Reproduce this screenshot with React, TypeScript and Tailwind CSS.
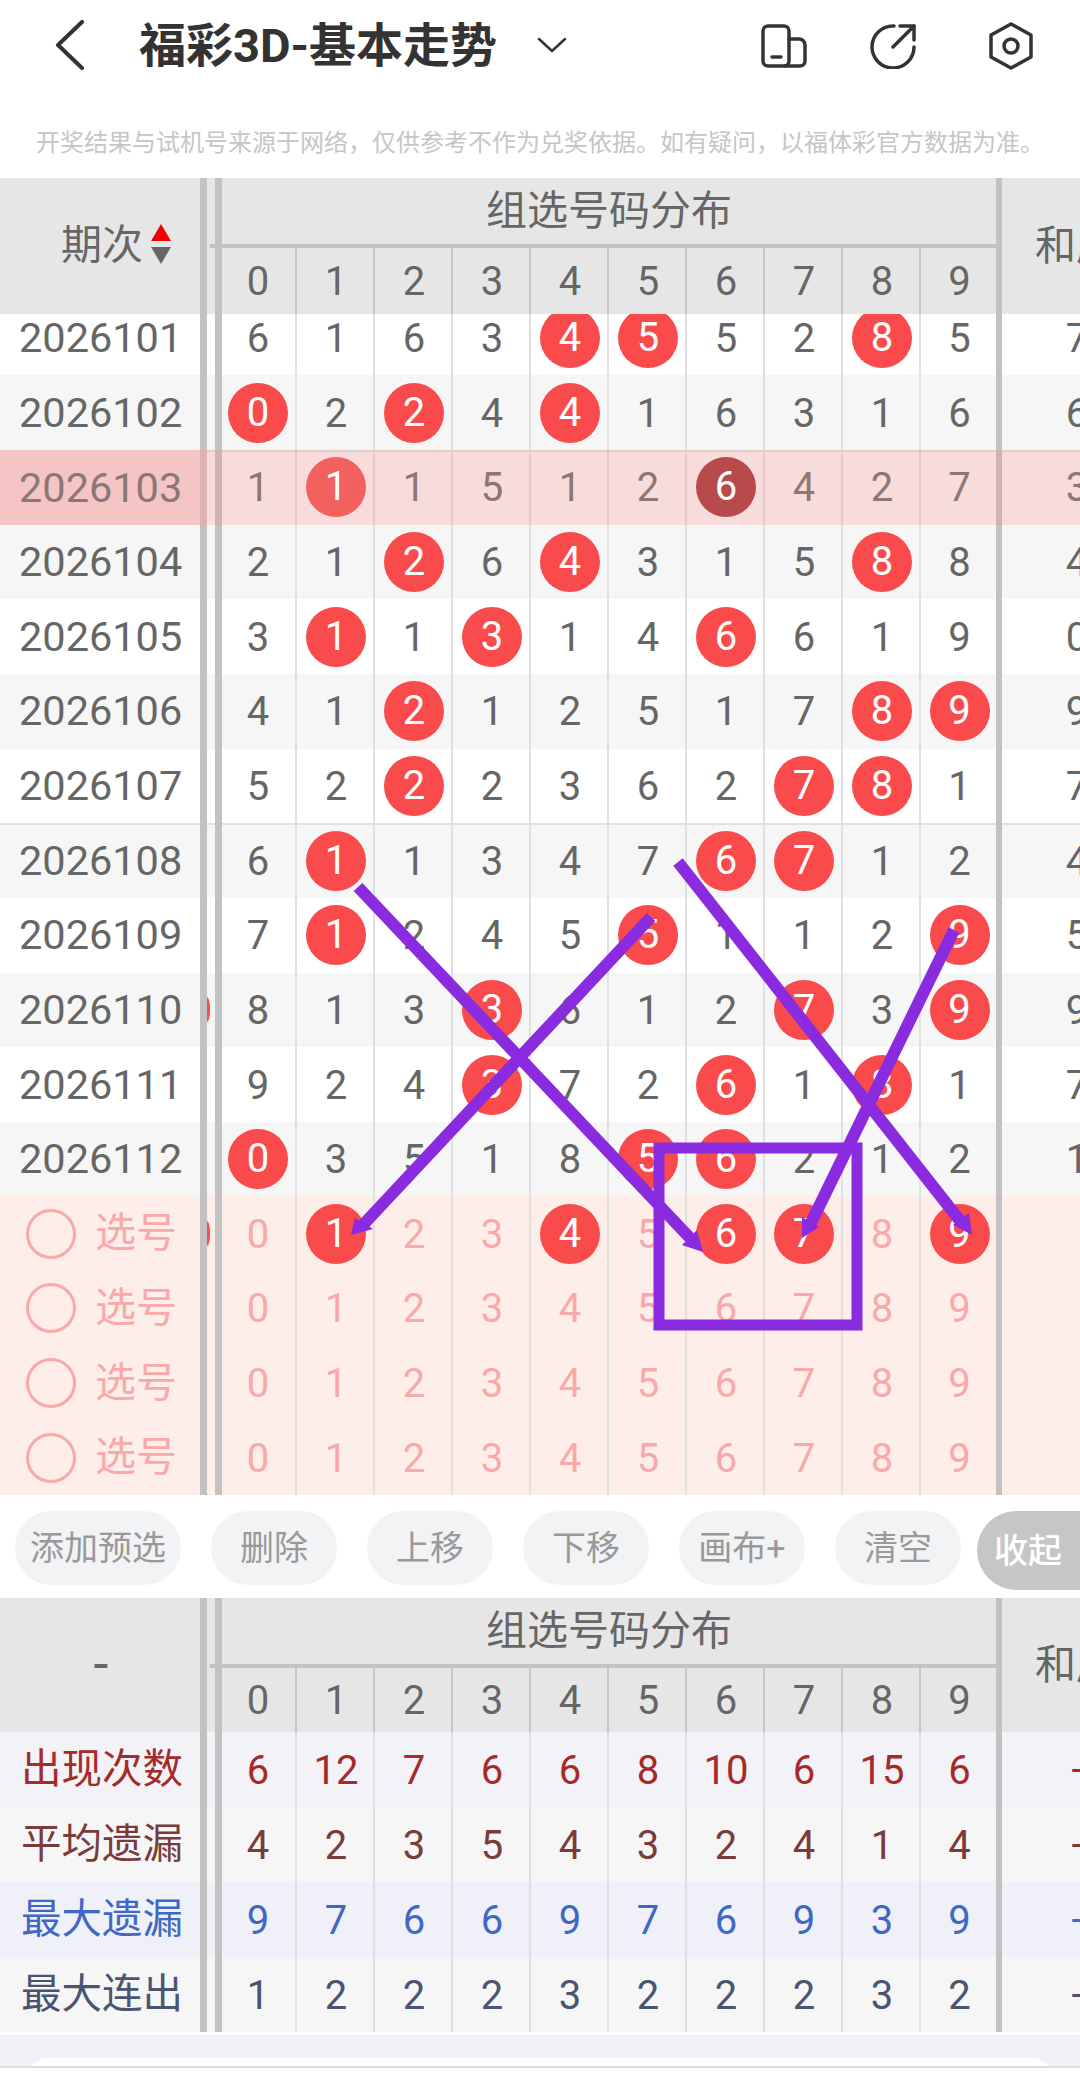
import React from 'react';

const COLS = [0, 1, 2, 3, 4, 5, 6, 7, 8, 9];

type DrawRow = { id: string; nums: number[]; hits: number[]; sum: number; sliver?: boolean };

const draws: DrawRow[] = [
    { id: '2026101', nums: [6, 1, 6, 3, 4, 5, 5, 2, 8, 5], hits: [4, 5, 8], sum: 7 },
    { id: '2026102', nums: [0, 2, 2, 4, 4, 1, 6, 3, 1, 6], hits: [0, 2, 4], sum: 6 },
    { id: '2026103', nums: [1, 1, 1, 5, 1, 2, 6, 4, 2, 7], hits: [1, 6], sum: 3 },
    { id: '2026104', nums: [2, 1, 2, 6, 4, 3, 1, 5, 8, 8], hits: [2, 4, 8], sum: 4 },
    { id: '2026105', nums: [3, 1, 1, 3, 1, 4, 6, 6, 1, 9], hits: [1, 3, 6], sum: 0 },
    { id: '2026106', nums: [4, 1, 2, 1, 2, 5, 1, 7, 8, 9], hits: [2, 8, 9], sum: 9 },
    { id: '2026107', nums: [5, 2, 2, 2, 3, 6, 2, 7, 8, 1], hits: [2, 7, 8], sum: 7 },
    { id: '2026108', nums: [6, 1, 1, 3, 4, 7, 6, 7, 1, 2], hits: [1, 6, 7], sum: 4 },
    { id: '2026109', nums: [7, 1, 2, 4, 5, 5, 1, 1, 2, 9], hits: [1, 5, 9], sum: 5 },
    { id: '2026110', nums: [8, 1, 3, 3, 6, 1, 2, 7, 3, 9], hits: [3, 7, 9], sum: 9, sliver: true },
    { id: '2026111', nums: [9, 2, 4, 3, 7, 2, 6, 1, 8, 1], hits: [3, 6, 8], sum: 7 },
    { id: '2026112', nums: [0, 3, 5, 1, 8, 5, 6, 2, 1, 2], hits: [0, 5, 6], sum: 1 },
];

const stats = [
    { label: '出现次数', nums: ['6', '12', '7', '6', '6', '8', '10', '6', '15', '6'], text: 'text-[#a52a2a]', bg: 'bg-[#f2f2f7]' },
    { label: '平均遗漏', nums: ['4', '2', '3', '5', '4', '3', '2', '4', '1', '4'], text: 'text-[#7a3b3b]', bg: 'bg-[#f6f6f6]' },
    { label: '最大遗漏', nums: ['9', '7', '6', '6', '9', '7', '6', '9', '3', '9'], text: 'text-[#3f68c4]', bg: 'bg-[#f0f1f8]' },
    { label: '最大连出', nums: ['1', '2', '2', '2', '3', '2', '2', '2', '3', '2'], text: 'text-[#4a5572]', bg: 'bg-[#f6f6f6]' },
];

const Bar = ({ tone = 'bg-[#c2c2c2]', w = 'w-[7px]' }: { tone?: string; w?: string }) => (
    <div className={`${w} shrink-0 self-stretch ${tone}`} />
);

const Cell = ({ col, line, children }: { col: number; line: string; children: React.ReactNode }) => {
    const width = col === 0 ? 'w-[75px] border-r-2 pr-[1px]' : col === 9 ? 'w-[75px] pl-[2px]' : 'w-[78px] border-r-2 pl-[2px]';
    return (
        <div className={`${width} ${line} box-border shrink-0 self-stretch flex items-center justify-center`}>
            {children}
        </div>
    );
};

const Num = ({ children }: { children: React.ReactNode }) => <span className="pt-[2px]">{children}</span>;

const Ball = ({ n, tone = 'bg-[#f94b4b]' }: { n: number; tone?: string }) => (
    <div className={`w-[60px] h-[60px] shrink-0 rounded-full flex items-center justify-center text-white ${tone}`}>{n}</div>
);

const Sliver = () => <div className="w-[3px] h-[25px] rounded-tr-[3px_12px] rounded-br-[3px_12px] bg-[#f94b4b]" />;

const DrawLine = ({ row }: { row: DrawRow }) => {
    const striped = draws.indexOf(row) % 2 === 1;
    const current = row.id === '2026103';
    const topLine = row.id === '2026108' ? 'shadow-[inset_0_2px_0_#e0e0e0]' : '';
    const bg = current ? 'bg-[#f8dcdc] shadow-[inset_0_2px_0_#e4cccc]' : striped ? 'bg-[#f6f6f6]' : 'bg-white';
    return (
        <div className={`flex h-[74.67px] items-center ${bg} ${topLine} ${current ? 'text-[#8c7676]' : 'text-[#666666]'}`}>
            <div className={`w-[200px] shrink-0 self-stretch flex items-center pl-[19px] text-[41.5px] ${current ? 'bg-[#f5c5c5]' : ''}`}>{row.id}</div>
            <Bar tone={current ? 'bg-[#ddb2b2]' : 'bg-[#c2c2c2]'} />
            <div className="w-[8px] shrink-0 flex items-center">{row.sliver && <Sliver />}</div>
            <Bar tone={current ? 'bg-[#d4b0b0]' : 'bg-[#c2c2c2]'} />
            {COLS.map(c => (
                <Cell key={c} col={c} line={current ? 'border-[#e6c8c8]' : 'border-[#e0e0e0]'}>
                    {row.hits.includes(c) ? (
                        <Ball
                            n={c}
                            tone={current ? (c === 6 ? 'bg-[#b84a4c]' : 'bg-[#f36060]') : 'bg-[#f94b4b]'}
                        />
                    ) : (
                        <Num>{row.nums[c]}</Num>
                    )}
                </Cell>
            ))}
            <Bar tone={current ? 'bg-[#d4b0b0]' : 'bg-[#c2c2c2]'} w="w-[6px]" />
            <div className="w-[150px] shrink-0 text-center pt-[2px]">{row.sum}</div>
        </div>
    );
};

const PickLine = ({ hits = [], sliver = false }: { hits?: number[]; sliver?: boolean }) => (
    <div className="flex h-[74.67px] items-center bg-[#fdeee9] text-[#f9a9a9]">
        <div className="w-[200px] shrink-0 flex items-center pl-[26px] gap-[19px]">
            <div className="w-[50px] h-[50px] rounded-full border-[3px] border-[#f9a9a9]" />
            <span className="text-[41px]">选号</span>
        </div>
        <Bar />
        <div className="w-[8px] shrink-0 flex items-center">{sliver && <Sliver />}</div>
        <Bar />
        {COLS.map(c => (
            <Cell key={c} col={c} line="border-[#e0e0e0]">
                {hits.includes(c) ? <Ball n={c} /> : <Num>{c}</Num>}
            </Cell>
        ))}
        <Bar w="w-[6px]" />
    </div>
);

const TableHead = ({ left, sort, h, top }: { left: string; sort?: boolean; h: string; top: string }) => (
    <div className={`flex ${h} bg-[#e6e6e6] text-[#666666]`}>
        <div className="w-[200px] shrink-0 flex items-center justify-center pl-[33px] pb-[2px]">
            <span className={sort ? 'text-[41px]' : 'text-[54px] pr-[31px]'}>{left}</span>
            {sort && (
                <svg width="22" height="42" viewBox="0 0 22 42" className="ml-[7px]">
                    <polygon points="11,0 21,17 1,17" fill="#f00000" />
                    <polygon points="1,23 21,23 11,40" fill="#666666" />
                </svg>
            )}
        </div>
        <Bar />
        <div className="w-[8px] shrink-0" />
        <div className="w-[787px] shrink-0 flex flex-col">
            <div className="flex flex-1">
                <Bar />
                <div className="flex-1 flex items-center justify-center text-[41px]">组选号码分布</div>
                <Bar w="w-[6px]" />
            </div>
            <div className="h-[4px] ml-[-5px] bg-[#c2c2c2]" />
            <div className={`flex ${top}`}>
                <Bar />
                {COLS.map(c => (
                    <Cell key={c} col={c} line="border-[#c6c6c6]"><Num>{c}</Num></Cell>
                ))}
                <Bar w="w-[6px]" />
            </div>
        </div>
        <div className="w-[150px] shrink-0 flex items-center pl-[33px] whitespace-nowrap text-[41px]">和尾</div>
    </div>
);

const Chip = ({ label, w }: { label: string; w: string }) => (
    <div className={`${w} h-[74px] shrink-0 rounded-[37px] bg-[#f2f3f5] text-[#999999] text-[34px] flex items-center justify-center`}>
        {label}
    </div>
);

const Marks = () => (
    <svg width="1080" height="2077" viewBox="0 0 1080 2077" className="absolute left-0 top-0 pointer-events-none">
        <g stroke="#8a2be0" strokeWidth="12" fill="none">
            <line x1="358" y1="887" x2="690" y2="1238" />
            <line x1="651" y1="917" x2="362" y2="1226" />
            <line x1="678" y1="862" x2="961" y2="1222" />
            <line x1="954" y1="930" x2="810" y2="1225" />
        </g>
        <rect x="659" y="1148" width="198" height="177" fill="none" stroke="#8a2be0" strokeWidth="11" />
        <g fill="#8a2be0">
            <polygon points="703,1252 682,1245 697,1230" />
            <polygon points="351,1235 355,1218 373,1229" />
            <polygon points="972,1235 953,1225 969,1213" />
            <polygon points="802,1238 802,1217 819,1227" />
        </g>
    </svg>
);

const App: React.FC = () => {
    return (
        <div className="relative w-[1080px] h-[2077px] overflow-hidden bg-white text-[40px] leading-none font-['Roboto','Noto_Sans_CJK_SC',sans-serif]">
            <div className="flex h-[90px] items-center text-[#333333]">
                <svg width="34" height="50" viewBox="0 0 34 50" className="ml-[52px] shrink-0">
                    <polyline points="30,2 6,25 30,48" fill="none" stroke="#333333" strokeWidth="4" strokeLinecap="round" strokeLinejoin="round" />
                </svg>
                <div className="ml-[53px] text-[47px] font-bold whitespace-nowrap">福彩3D-基本走势</div>
                <svg width="30" height="16" viewBox="0 0 30 16" className="ml-[40px] shrink-0">
                    <polyline points="2,2 15,14 28,2" fill="none" stroke="#333333" strokeWidth="2.5" strokeLinecap="round" strokeLinejoin="round" />
                </svg>
                <svg width="46" height="44" viewBox="0 0 46 44" className="ml-auto shrink-0 mt-[2px]">
                    <g fill="none" stroke="#333333" strokeWidth="3.5" strokeLinecap="round" strokeLinejoin="round">
                        <rect x="2" y="2" width="26" height="40" rx="5" />
                        <path d="M28 15h10a6 6 0 0 1 6 6v16a5 5 0 0 1-5 5H24" />
                        <path d="M11 33h9" />
                    </g>
                </svg>
                <svg width="46" height="46" viewBox="0 0 46 46" className="ml-[63px] shrink-0 mt-[2px]">
                    <g fill="none" stroke="#333333" strokeWidth="3.5" strokeLinecap="round" strokeLinejoin="round">
                        <path d="M24 3A21 21 0 1 0 44 24" />
                        <path d="M23 24L44 3" />
                        <path d="M30 3h14v14" />
                    </g>
                </svg>
                <svg width="46" height="48" viewBox="0 0 46 48" className="ml-[72px] mr-[46px] shrink-0 mt-[2px]">
                    <g fill="none" stroke="#333333" strokeWidth="3.5" strokeLinejoin="round">
                        <polygon points="23,2 43,13 43,35 23,46 3,35 3,13" />
                        <circle cx="23" cy="24" r="7" />
                    </g>
                </svg>
            </div>

            <div className="h-[88px] flex items-center justify-center pt-[18px] text-[24px] text-[#c6c6c6] whitespace-nowrap">
                开奖结果与试机号来源于网络，仅供参考不作为兑奖依据。如有疑问，以福体彩官方数据为准。
            </div>

            <TableHead left="期次" sort h="h-[136px]" top="h-[66px]" />

            <div className="h-[1182px] overflow-hidden">
                <div className="mt-[-13.4px]">
                    {draws.map(row => (
                        <DrawLine key={row.id} row={row} />
                    ))}
                    <PickLine hits={[1, 4, 6, 7, 9]} sliver />
                    <PickLine />
                    <PickLine />
                    <PickLine />
                </div>
            </div>

            <div className="h-[102px] flex items-start pt-[15px] pl-[15px] gap-[30px] relative">
                <Chip label="添加预选" w="w-[166px]" />
                <Chip label="删除" w="w-[126px]" />
                <Chip label="上移" w="w-[126px]" />
                <Chip label="下移" w="w-[126px]" />
                <Chip label="画布+" w="w-[126px]" />
                <Chip label="清空" w="w-[126px]" />
                <div className="absolute left-[977px] top-[15px] w-[120px] h-[79px] rounded-l-[40px] bg-[#c6c6c6] text-white text-[34px] font-medium flex items-center pl-[17px]">
                    收起
                </div>
            </div>

            <TableHead left="-" h="h-[134px]" top="h-[64px]" />

            {stats.map(s => (
                <div key={s.label} className={`flex h-[75px] items-center ${s.bg} ${s.text}`}>
                    <div className="w-[200px] shrink-0 pl-[21px] text-[40.5px]">{s.label}</div>
                    <Bar />
                    <div className="w-[8px] shrink-0" />
                    <Bar />
                    {COLS.map(c => (
                        <Cell key={c} col={c} line="border-[#e0e0e0]"><Num>{s.nums[c]}</Num></Cell>
                    ))}
                    <Bar w="w-[6px]" />
                    <div className="w-[150px] shrink-0 text-center">-</div>
                </div>
            ))}

            <div className="h-[3px] bg-white" />
            <div className="h-[31px] bg-[#f1f1f6] pt-[23px] overflow-hidden">
                <div className="mx-[25px] h-[40px] rounded-t-[24px] bg-white" />
            </div>
            <div className="h-[2px] bg-[#dddddd]" />

            <Marks />
        </div>
    );
};

export default App;
